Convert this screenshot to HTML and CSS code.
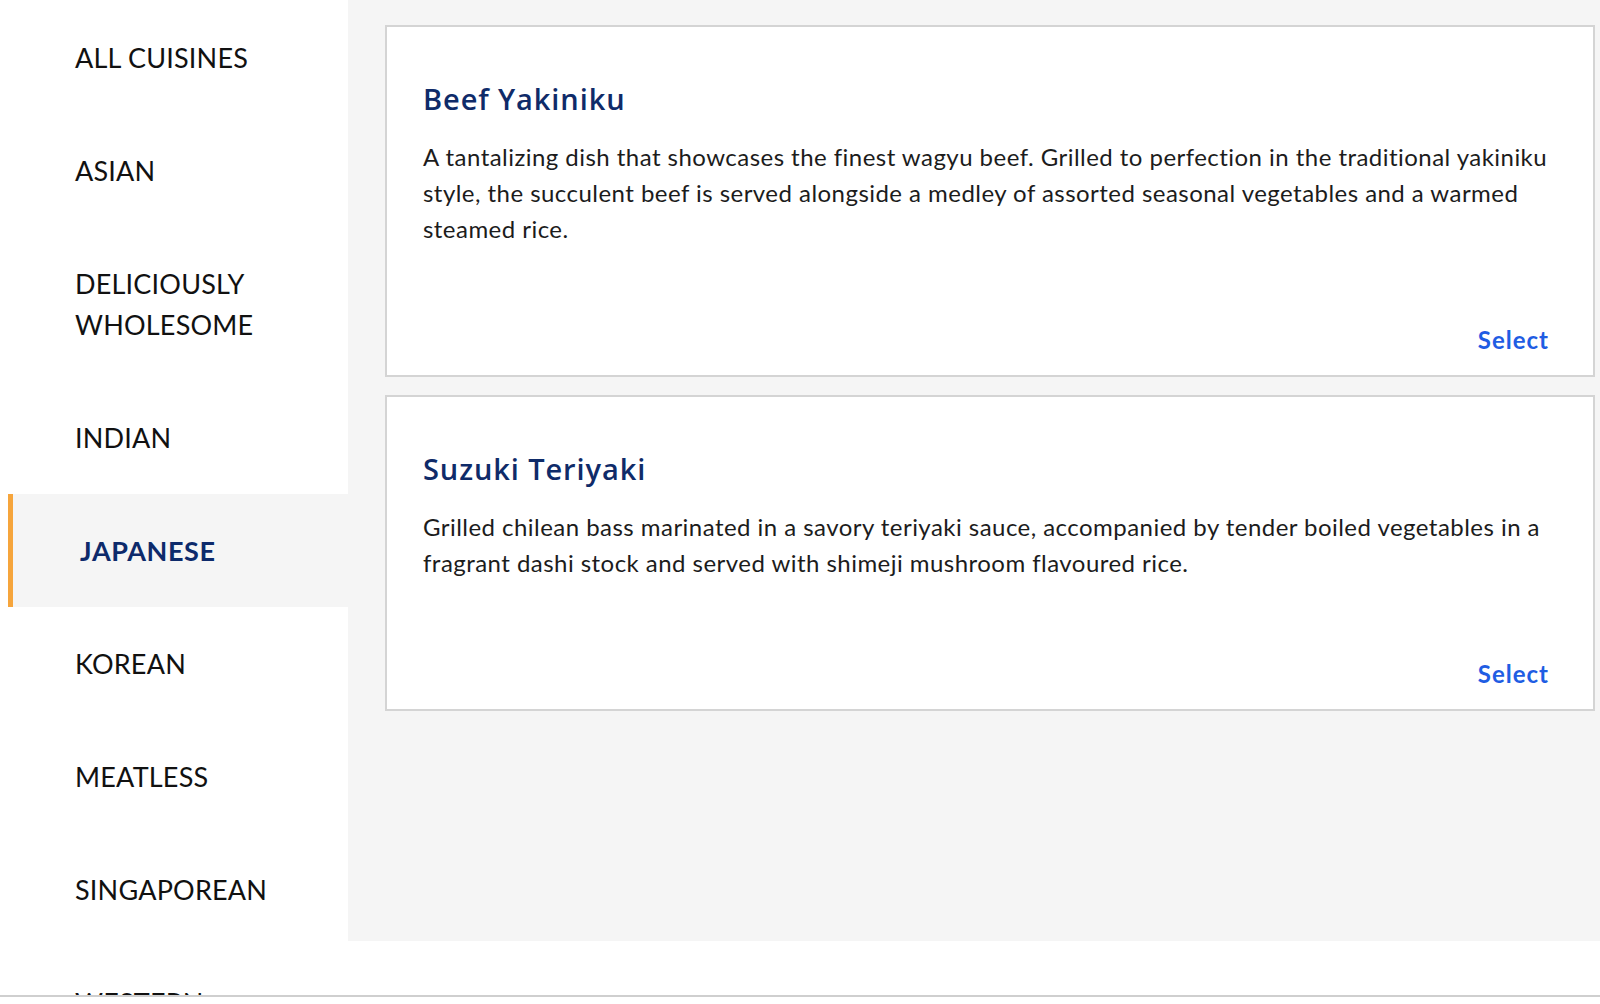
FILE: index.html
```html
<!DOCTYPE html>
<html lang="en">
<head>
<meta charset="utf-8">
<title>Cuisines</title>
<link rel="stylesheet" href="styles.css">
</head>
<body>
<div class="page">
  <nav class="sidebar">
    <div class="cat">ALL CUISINES</div>
    <div class="cat">ASIAN</div>
    <div class="cat">DELICIOUSLY<br>WHOLESOME</div>
    <div class="cat">INDIAN</div>
    <div class="cat cat-active">JAPANESE</div>
    <div class="cat">KOREAN</div>
    <div class="cat">MEATLESS</div>
    <div class="cat">SINGAPOREAN</div>
    <div class="cat">WESTERN</div>
  </nav>
  <main class="main">
    <section class="card">
      <h2 class="card-title">Beef Yakiniku</h2>
      <p class="card-desc">A tantalizing dish that showcases the finest wagyu beef. Grilled to perfection in the traditional yakiniku style, the succulent beef is served alongside a medley of assorted seasonal vegetables and a warmed steamed rice.</p>
      <div class="card-actions"><a class="select" href="#">Select</a></div>
    </section>
    <section class="card">
      <h2 class="card-title">Suzuki Teriyaki</h2>
      <p class="card-desc">Grilled chilean bass marinated in a savory teriyaki sauce, accompanied by tender boiled vegetables in a fragrant dashi stock and served with shimeji mushroom flavoured rice.</p>
      <div class="card-actions"><a class="select" href="#">Select</a></div>
    </section>
  </main>
</div>
</body>
</html>
```
FILE: styles.css
```css
html, body {
  margin: 0;
  padding: 0;
  background: #ffffff;
}
body {
  font-family: Lato, "Noto Sans", sans-serif;
  color: #1a1a1a;
}
.page {
  display: flex;
  align-items: flex-start;
  height: 995px;
  overflow: hidden;
  border-bottom: 2px solid #cfcfcf;
  padding-left: 8px;
}
.sidebar {
  flex: none;
  width: 340px;
  padding-top: 1px;
  background: #ffffff;
}
.cat {
  padding: 36px 0 36px 67px;
  font-size: 27px;
  line-height: 41px;
  letter-spacing: 0.2px;
  color: #111111;
}
.cat-active {
  border-left: 5px solid #f6a53c;
  padding-left: 67px;
  background: #f5f5f5;
  color: #0d2a6b;
  font-weight: 700;
  letter-spacing: 0.6px;
}
.main {
  flex: 1;
  height: 941px;
  box-sizing: border-box;
  padding: 25px 5px 0 37px;
  background: #f5f5f5;
}
.card {
  display: flex;
  flex-direction: column;
  background: #ffffff;
  border: 2px solid #d4d4d4;
  padding: 54px 36px 17px 36px;
  margin-bottom: 18px;
}
.card-title {
  margin: 0 0 22px 0;
  font-family: "Open Sans", "Noto Sans", sans-serif;
  font-size: 29px;
  line-height: 36px;
  font-weight: 600;
  letter-spacing: 0.9px;
  color: #0f2b69;
}
.card-desc {
  margin: 0 0 75px 0;
  font-size: 24px;
  line-height: 36px;
  letter-spacing: 0.46px;
  color: #1c1c1c;
}
.card-actions {
  display: flex;
  justify-content: flex-end;
  padding-right: 8px;
}
.select {
  font-size: 24px;
  line-height: 36px;
  font-weight: 700;
  letter-spacing: 1px;
  color: #1f5de3;
  text-decoration: none;
}
```
